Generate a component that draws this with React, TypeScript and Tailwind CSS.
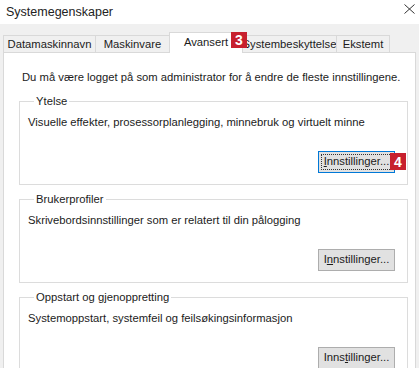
import { ReactNode } from "react";

type Tab = { label: string; active?: boolean; w: string; badge?: string };

const tabs: Tab[] = [
  { label: "Datamaskinnavn", w: "w-[93px]" },
  { label: "Maskinvare", w: "w-[75px]" },
  { label: "Avansert", w: "w-[74px]", active: true },
  { label: "Systembeskyttelse", w: "w-[95px]", badge: "3" },
  { label: "Ekstemt", w: "w-[54px]" },
];

const Badge = ({ n, className }: { n: string; className: string }) => (
  <div
    className={
      "absolute z-20 flex items-center justify-center bg-[#c7202e] text-white font-bold text-[14px] leading-none " +
      className
    }
  >
    {n}
  </div>
);

type GroupProps = {
  title: string;
  text: string;
  button: ReactNode;
  className?: string;
};

const Group = ({ title, text, button, className = "" }: GroupProps) => (
  <fieldset className={"ml-[15px] w-[389px] border border-[#dcdcdc] pl-[8px] pr-[12px] pb-[11px] " + className}>
    <legend className="ml-[6px] px-[2px] leading-[16px]">{title}</legend>
    <div className="mt-[5px] leading-[16px] whitespace-nowrap">{text}</div>
    <div className="mt-[21px] flex justify-end">{button}</div>
  </fieldset>
);

const Btn = ({ pre, u, post, focused }: { pre: string; u: string; post: string; focused?: boolean }) => (
  <div
    className={
      "relative flex h-[22px] w-[77px] items-center justify-center border leading-none " +
      (focused ? "border-[#0078d7] bg-[#e1e1e1]" : "border-[#adadad] bg-[#e1e1e1]")
    }
  >
    {focused && <div className="absolute inset-[2px] border border-dotted border-[#333]" />}
    <span>
      {pre}
      <span className="underline">{u}</span>
      {post}
    </span>
    {focused && <Badge n="4" className="left-[71px] top-[1px] h-[17px] w-[16px]" />}
  </div>
);

export default function App() {
  return (
    <div
      className="relative h-[368px] w-[419px] overflow-hidden bg-[#f0f0f0] text-[11.25px] text-[#1b1b1b]"
      style={{ fontFamily: "'Liberation Sans', Arial, sans-serif" }}
    >
      {/* title bar */}
      <div className="flex h-[24px] items-center justify-between bg-white pl-[6px] pr-[3px]">
        <span className="text-[12.5px] text-[#222]">Systemegenskaper</span>
        <svg width="11" height="10" viewBox="0 0 11 10" className="mt-[-6px] mr-[1px]">
          <path d="M0.5 0.5 L10.5 9.5 M10.5 0.5 L0.5 9.5" stroke="#333" strokeWidth="1" />
        </svg>
      </div>

      {/* tabs */}
      <div className="flex h-[28px] items-end pl-[3px]">
        {tabs.map((t) =>
          t.active ? (
            <div
              key={t.label}
              className={
                "relative z-10 -mb-px -ml-px flex h-[21px] items-center justify-center border border-b-0 border-[#d9d9d9] bg-white pb-[2px] " +
                t.w
              }
            >
              {t.label}
            </div>
          ) : (
            <div
              key={t.label}
              className={
                "relative flex h-[17px] items-center justify-center border border-b-0 border-[#d9d9d9] -ml-px first:ml-0 " +
                t.w
              }
            >
              {t.label}
              {t.badge && <Badge n={t.badge} className="-left-[12px] -top-[4px] h-[16px] w-[16px]" />}
            </div>
          )
        )}
      </div>

      {/* panel */}
      <div className="mx-[3px] h-[400px] border border-[#d9d9d9] bg-white pt-[16px]">
        <div className="pl-[18px] leading-[16px]">
          Du må være logget på som administrator for å endre de fleste innstillingene.
        </div>
        <Group
          className="mt-[8px]"
          title="Ytelse"
          text="Visuelle effekter, prosessorplanlegging, minnebruk og virtuelt minne"
          button={<Btn pre="" u="I" post="nnstillinger..." focused />}
        />
        <Group
          className="mt-[6px]"
          title="Brukerprofiler"
          text="Skrivebordsinnstillinger som er relatert til din pålogging"
          button={<Btn pre="I" u="n" post="nstillinger..." />}
        />
        <Group
          className="mt-[6px]"
          title="Oppstart og gjenoppretting"
          text="Systemoppstart, systemfeil og feilsøkingsinformasjon"
          button={<Btn pre="Inns" u="t" post="illinger..." />}
        />
      </div>
    </div>
  );
}
